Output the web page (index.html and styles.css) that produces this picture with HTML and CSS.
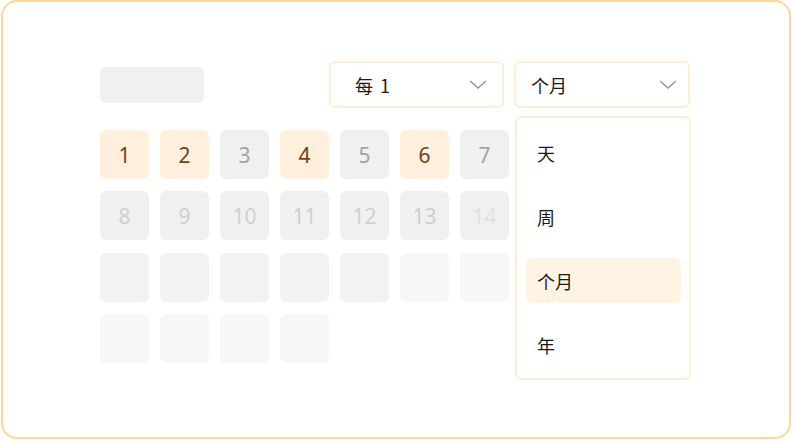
FILE: index.html
```html
<!DOCTYPE html>
<html lang="zh">
<head>
<meta charset="utf-8">
<link rel="stylesheet" href="styles.css">
</head>
<body>
<div class="frame">
  <div class="toolbar">
    <div class="skeleton"></div>
    <div class="select select-a">
      <span class="label">每 1</span>
      <svg class="chev" width="18" height="9" viewBox="0 0 18 9"><path d="M1 1 L9 8 L17 1" fill="none" stroke="#9a9a9a" stroke-width="1.6"/></svg>
    </div>
    <div class="select select-b">
      <span class="label">个月</span>
      <svg class="chev" width="18" height="9" viewBox="0 0 18 9"><path d="M1 1 L9 8 L17 1" fill="none" stroke="#9a9a9a" stroke-width="1.6"/></svg>
      <div class="menu">
        <div class="item">天</div>
        <div class="item">周</div>
        <div class="item active">个月</div>
        <div class="item">年</div>
      </div>
    </div>
  </div>
  <div class="grid">
    <div class="cell on">1</div>
    <div class="cell on">2</div>
    <div class="cell off">3</div>
    <div class="cell on">4</div>
    <div class="cell off">5</div>
    <div class="cell on">6</div>
    <div class="cell off">7</div>
    <div class="cell dim">8</div>
    <div class="cell dim">9</div>
    <div class="cell dim">10</div>
    <div class="cell dim">11</div>
    <div class="cell dim">12</div>
    <div class="cell dim">13</div>
    <div class="cell dimmer">14</div>
    <div class="cell blank"></div>
    <div class="cell blank"></div>
    <div class="cell blank"></div>
    <div class="cell blank"></div>
    <div class="cell blank"></div>
    <div class="cell faint"></div>
    <div class="cell faint"></div>
    <div class="cell faint"></div>
    <div class="cell faint"></div>
    <div class="cell faint"></div>
    <div class="cell faint"></div>
  </div>
</div>
</body>
</html>
```

FILE: styles.css
```css
* { box-sizing: border-box; }
html, body { margin: 0; padding: 0; background: #fff; }
body { font-family: "Noto Sans", "Noto Sans CJK SC", sans-serif; }
.frame {
  width: 790px;
  height: 439px;
  margin: 0 1px;
  border: 2px solid #ffd796;
  border-radius: 16px;
  padding: 59px 0 0 97px;
}
.toolbar {
  display: flex;
  align-items: center;
  width: 592px;
}
.skeleton {
  width: 104px;
  height: 36px;
  background: #f0f0f0;
  border-radius: 6px;
  margin-right: 125px;
}
.select {
  position: relative;
  height: 47px;
  border: 2px solid #ffefd2;
  border-radius: 6px;
  display: flex;
  align-items: center;
  justify-content: space-between;
  font-size: 18px;
  color: #1a1a1a;
  font-family: "Noto Sans CJK SC", sans-serif;
}
.select-a { width: 175px; padding: 0 15px 0 24px; margin-right: 10px; }
.select-b { width: 176px; padding: 0 11px 0 15px; }
.label { line-height: 1; word-spacing: 3px; }
.chev { display: block; }
.menu {
  position: absolute;
  left: -1px;
  top: 53px;
  width: 176px;
  height: 264px;
  background: #fff;
  border: 2px solid #ffefd2;
  border-radius: 6px;
  padding: 12px 8px 11px 9px;
  display: flex;
  flex-direction: column;
  gap: 19px;
}
.item {
  height: 45px;
  display: flex;
  align-items: center;
  padding-left: 11px;
  border-radius: 6px;
  font-size: 18px;
  color: #1a1a1a;
}
.item.active { background: #fff3e4; }
.grid {
  margin-top: 22px;
  display: grid;
  grid-template-columns: repeat(7, 49px);
  grid-auto-rows: 49px;
  column-gap: 11px;
  row-gap: 12.4px;
  width: 409px;
}
.cell {
  border-radius: 6px;
  display: flex;
  align-items: center;
  justify-content: center;
  font-size: 21px;
  background: #f0f0f0;
}
.cell.on { background: #ffefdc; color: #6e4420; }
.cell.off { color: #a3a3a3; }
.cell.dim { color: #cfcfcf; }
.cell.dimmer { color: #e0e0e0; }
.cell.blank { background: #f2f2f2; }
.cell.faint { background: #f7f7f7; }
```
